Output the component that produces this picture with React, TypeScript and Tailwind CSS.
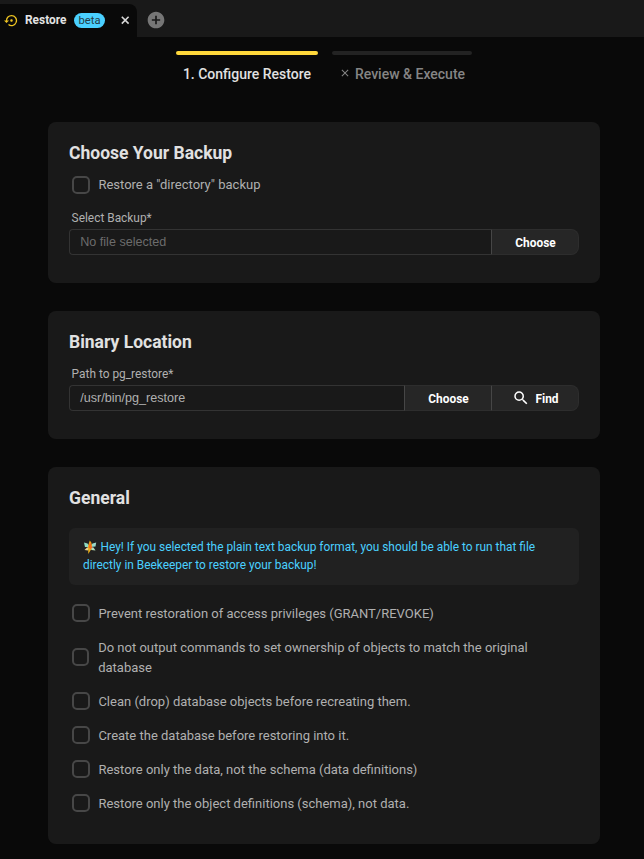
import type { ReactNode } from "react";
import { MdAddCircle, MdClose, MdSearch, MdSettingsBackupRestore } from "react-icons/md";

function Card({ title, className, children }: { title: string; className: string; children: ReactNode }) {
  return (
    <section className={`rounded-lg bg-[#191919] px-[21px] pt-[18px] ${className}`}>
      <h2 className="h-[26px] text-[17.5px] leading-[26px] font-bold text-[#e1e1e1]">{title}</h2>
      {children}
    </section>
  );
}

function CheckRow({ children, tall = false, textClass = "pt-[1.2px]" }: { children: ReactNode; tall?: boolean; textClass?: string }) {
  return (
    <label className={`flex items-center pl-[3px] text-[13px] leading-5 text-[#b0b0b0] ${tall ? "h-10" : "h-5"}`}>
      <span className={`h-[18px] shrink-0 rounded-[5px] border-2 border-[#474747] ${tall ? "mr-[9.2px] w-[17px]" : "mr-[8.4px] w-[18px]"}`} />
      <span className={textClass}>{children}</span>
    </label>
  );
}

function Emoji() {
  return (
    <svg viewBox="0 0 14 14" className="mr-[3.5px] inline-block h-[14px] w-[14px] align-[-3px]">
      <path d="M1 2.5 4.5 3.5 7 7 2 7Z" fill="#8edbc4" />
      <path d="M13.2 2.5 9.5 3.5 7 7 12.5 6.5Z" fill="#9bd9c9" />
      <path d="M1.5 10 4 7.5 7 7 5 10.5Z" fill="#ecd38b" />
      <path d="M12.5 10.5 10.5 7.5 7 7 8.5 10Z" fill="#b9dfbb" />
      <path d="M6.8 .5 8.3 2.5 9 6 8 9.5 5.3 14 5.2 9 5 6Z" fill="#efb31c" />
      <path d="M7.2 2 8.3 5 9.2 8 7.5 9 5.6 7.5 6 5Z" fill="#f36a1c" />
    </svg>
  );
}

function PathField({ children, muted = false }: { children: ReactNode; muted?: boolean }) {
  return (
    <div className={`min-w-0 flex-1 rounded-l-[4px] border border-r-0 border-[#333] pl-[10.2px] font-['Liberation_Sans',sans-serif] text-[12.6px] leading-6 ${muted ? "text-[#6c6c6c]" : "text-[#b0b0b0]"}`}>
      {children}
    </div>
  );
}

function FieldButton({ children, last = false }: { children: ReactNode; last?: boolean }) {
  return (
    <button className={`flex items-center justify-center border border-[#2d2d2d] border-l-[#464646] bg-[#262626] pt-[2px] pl-px text-[11.9px] leading-[18px] font-bold text-white ${last ? "w-[88px] rounded-r-lg" : "w-[87px] border-r-0"}`}>
      {children}
    </button>
  );
}

export default function App() {
  return (
    <div className="h-[859px] w-[644px] overflow-hidden bg-[#090909] font-['Roboto',sans-serif]">
      <header className="flex h-[37px] bg-[#191919] pt-1">
        <div className="flex h-[33px] w-[137px] items-center rounded-tr-lg bg-[#090909] pl-1">
          <MdSettingsBackupRestore className="h-[15px] w-[15px] text-[#efc521]" />
          <span className="ml-[6px] w-[42px] text-[11.9px] font-bold whitespace-nowrap text-[#e3e3e3]">Restore</span>
          <span className="ml-[7px] flex h-[15px] w-[31px] items-center justify-center rounded-full bg-[#4ad0ff] pt-px text-[11.2px] text-[#243c46]">beta</span>
          <svg viewBox="0 0 12 12" className="mb-px ml-[14px] h-3 w-3">
            <path d="M2.8 2.8 9.6 9.6M9.6 2.8 2.8 9.6" stroke="#d6d6d6" strokeWidth="1.6" />
          </svg>
        </div>
        <MdAddCircle className="mt-[6px] ml-[9px] h-5 w-5 text-[#767676]" />
      </header>
      <nav className="flex h-[85px] justify-center gap-[14px] pt-[14px] pl-1 text-[14px] leading-5 font-medium">
        <div className="w-[142px] text-center text-[#e1e1e1]">
          <div className="mb-[9px] h-1 rounded-sm bg-[#ffd83b]" />
          1. Configure Restore
        </div>
        <div className="w-[140px] text-[#858585]">
          <div className="mb-[9px] h-1 rounded-sm bg-[#232323]" />
          <div className="flex items-center justify-center">
            <MdClose className="mr-1 mb-[2px] h-3 w-3" />
            Review &amp; Execute
          </div>
        </div>
      </nav>
      <main className="flex flex-col gap-7 pr-11 pl-12">
        <Card title="Choose Your Backup" className="h-[161px]">
          <div className="mt-[9px]">
            <CheckRow textClass="">Restore a "directory" backup</CheckRow>
          </div>
          <div className="mt-[14px] pl-[2.6px] text-[11.9px] leading-[18px] text-[#b0b0b0]">Select Backup*</div>
          <div className="mt-[2px] flex h-[26px]">
            <PathField muted>No file selected</PathField>
            <FieldButton last>Choose</FieldButton>
          </div>
        </Card>
        <Card title="Binary Location" className="h-[128px]">
          <div className="mt-[10px] pl-[2.6px] text-[11.9px] leading-[18px] text-[#b0b0b0]">Path to pg_restore*</div>
          <div className="mt-[2px] flex h-[26px]">
            <PathField>/usr/bin/pg_restore</PathField>
            <FieldButton>Choose</FieldButton>
            <FieldButton last>
              <MdSearch className="mr-[5px] mb-[2px] h-[18px] w-[18px]" />
              Find
            </FieldButton>
          </div>
        </Card>
        <Card title="General" className="h-[377px]">
          <div className="mt-[17px] h-[57px] rounded-md bg-[#212121] px-[14px] pt-[10px] text-[11.9px] leading-[18px] text-[#4ad0ff]">
            <Emoji />
            Hey! If you selected the plain text backup format, you should be able to run that file
            <br />
            directly in Beekeeper to restore your backup!
          </div>
          <div className="mt-[18px] flex flex-col gap-[14px]">
            <CheckRow>Prevent restoration of access privileges (GRANT/REVOKE)</CheckRow>
            <CheckRow tall>
              Do not output commands to set ownership of objects to match the original
              <br />
              database
            </CheckRow>
            <CheckRow>Clean (drop) database objects before recreating them.</CheckRow>
            <CheckRow>Create the database before restoring into it.</CheckRow>
            <CheckRow>Restore only the data, not the schema (data definitions)</CheckRow>
            <CheckRow>Restore only the object definitions (schema), not data.</CheckRow>
          </div>
        </Card>
      </main>
    </div>
  );
}
